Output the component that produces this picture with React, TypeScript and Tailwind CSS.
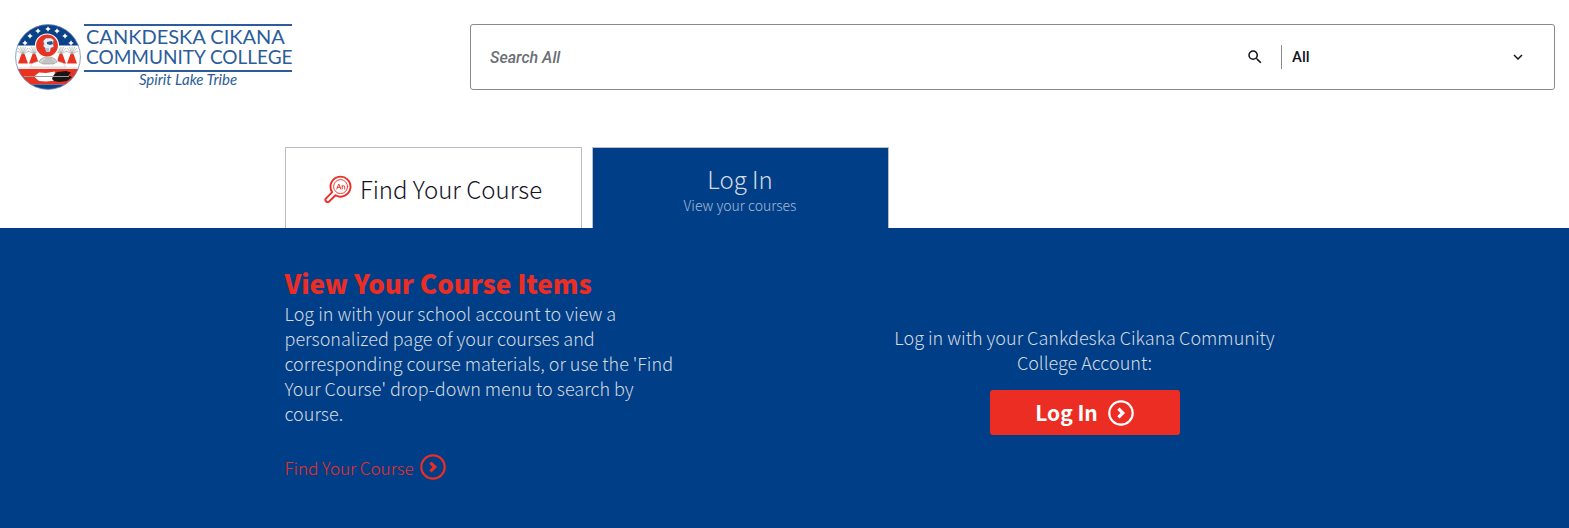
import { ReactNode } from 'react';
import { MdExpandMore, MdSearch } from 'react-icons/md';

const STARS = [
  [10, 19],
  [15, 12],
  [23, 7],
  [33, 5],
  [42, 7],
  [50, 12],
  [56, 19],
];

const TIPIS = [8, 19, 46, 57];

export default function App() {
  return (
    <div className="flex min-h-screen flex-col bg-white font-['Noto_Sans_CJK_SC',sans-serif]">
      <Header />
      <main className="flex grow flex-col">
        <Tabs />
        <LoginPanel />
      </main>
    </div>
  );
}

function Header() {
  return (
    <header className="flex items-start pt-6 pr-3.5 pl-[15px]">
      <div className="w-[455px] shrink-0">
        <a href="#" aria-label="Cankdeska Cikana Community College" className="flex w-fit">
          <Seal />
          <div className="ml-[3px] font-['Lato',sans-serif] text-[#2b5c9b]">
            <div className="w-52 border-y-2 border-[#2b5c9b] px-0.5 pb-0.5 whitespace-nowrap">
              <div className="text-[20px] leading-[20px]">CANKDESKA CIKANA</div>
              <div className="text-[19px] leading-[22px]">COMMUNITY COLLEGE</div>
            </div>
            <div className="text-center text-[15px] leading-[14px] italic">Spirit Lake Tribe</div>
          </div>
        </a>
      </div>
      <form
        className="flex h-[66px] grow items-center rounded-[3px] border border-[#8a8a8a] font-['Roboto',sans-serif] text-[#15131f]"
        onSubmit={(e) => e.preventDefault()}
      >
        <input
          type="search"
          aria-label="Search"
          placeholder="Search All"
          className="h-full min-w-0 grow bg-transparent pl-[19px] text-base outline-none placeholder:font-medium placeholder:text-[#6b6e75] placeholder:italic"
        />
        <button type="submit" aria-label="Submit search" className="mr-[17px]">
          <MdSearch className="h-[18px] w-[18px]" />
        </button>
        <div className="flex h-6 w-[273px] items-center border-l border-[#8a8a8a]">
          <select aria-label="Search category" className="w-full appearance-none bg-transparent pl-2.5 text-[15px] font-medium outline-none">
            <option>All</option>
          </select>
          <MdExpandMore className="pointer-events-none mr-[27px] h-[18px] w-[18px] shrink-0" />
        </div>
      </form>
    </header>
  );
}

function Tabs() {
  return (
    <div className="mx-auto mt-[57px] flex w-full max-w-[1000px] gap-2.5">
      <button className="flex h-[81px] w-[297px] items-center justify-center gap-2 border border-b-0 border-[#b9bec6] pt-0.5 text-[24px] font-light text-[#15131f]">
        <CourseSearchIcon />
        <span>Find Your Course</span>
      </button>
      <button className="flex h-[81px] w-[297px] flex-col items-center justify-center border border-b-0 border-[#b9bec6] bg-[#003f87] pt-1 font-light text-[#d5d9e0]">
        <span className="text-[24px] leading-[30px]">Log In</span>
        <span className="text-sm leading-[22px] text-[#a9bcd4]">View your courses</span>
      </button>
    </div>
  );
}

function LoginPanel() {
  return (
    <section className="grow bg-[#003f87] pt-9 pb-12 text-[18px] leading-[25px] font-light text-[#d5d9e0]">
      <div className="mx-auto flex w-full max-w-[1000px] items-start justify-between">
        <div className="w-2/5">
          <h1 className="text-[26px] leading-[37px] font-black text-[#ec2d24]">View Your Course Items</h1>
          <p>
            Log in with your school account to view a personalized page of your courses and corresponding course
            materials, or use the 'Find Your Course' drop-down menu to search by course.
          </p>
          <a href="#" className="mt-7 flex w-fit items-center gap-1.5 text-[17px] text-[#ec2d24]">
            Find Your Course
            <CircleArrow />
          </a>
        </div>
        <div className="mt-[61px] flex w-2/5 flex-col items-center text-center">
          <p>Log in with your Cankdeska Cikana Community College Account:</p>
          <RedButton>Log In</RedButton>
        </div>
      </div>
    </section>
  );
}

function RedButton({ children }: { children: ReactNode }) {
  return (
    <button className="mt-[15px] flex h-[45px] w-[190px] items-center justify-center gap-2.5 rounded-[3px] bg-[#ec2d24] text-[21px] font-bold text-white">
      {children}
      <CircleArrow />
    </button>
  );
}

function CircleArrow() {
  return (
    <svg viewBox="0 0 26 26" className="h-[26px] w-[26px]" fill="none" stroke="currentColor" aria-hidden="true">
      <circle cx="13" cy="13" r="11.7" strokeWidth="2.2" />
      <path d="M10.4 8.6 14.8 13l-4.4 4.4" strokeWidth="3.2" />
    </svg>
  );
}

function CourseSearchIcon() {
  return (
    <svg viewBox="0 0 28 28" className="h-7 w-7" fill="none" stroke="#ec2d24" strokeLinecap="round" strokeLinejoin="round" aria-hidden="true">
      <path d="M8.2 17.2a10 10 0 1 1 3.3 3.1l-6.2 6.1a2.2 2.2 0 0 1-3.2-3.1z" strokeWidth="1.9" />
      <circle cx="16.6" cy="11.6" r="7" strokeWidth="0.9" />
      <path d="m12.8 14 2-5 2 5m-3.3-1.7h2.6M18.2 14v-3.4m0 .8c1-1.2 2.5-.8 2.5.6v2" strokeWidth="0.9" />
    </svg>
  );
}

function Seal() {
  return (
    <svg viewBox="0 0 66 66" className="h-[66px] w-[66px]" aria-hidden="true">
      <defs>
        <clipPath id="seal">
          <circle cx="33" cy="33" r="32.5" />
        </clipPath>
      </defs>
      <g clipPath="url(#seal)">
        <path d="M0 0h66v66H0z" fill="#fff" />
        <path d="M0 0h66v21.5H0z" fill="#0b4287" />
        <path d="M0 45h66v15.5H0z" fill="#ea3223" />
        <path d="M0 60.5h66V66H0z" fill="#0b4287" />
        {STARS.map(([x, y]) => (
          <path key={x} d="M0-2.8 1-1 2.8 0 1 1 0 2.8-1 1-2.8 0-1-1z" transform={`translate(${x} ${y})`} fill="#fff" />
        ))}
        {TIPIS.map((x) => (
          <g key={x} transform={`translate(${x} 0)`}>
            <path d="m-1.5 30-3.500 9.500H5L1.500 30z" fill="#ea3223" />
            <path d="m0 30-5-6m5 6-2.5-7M0 30v-7m0 7 2.5-7M0 30l5-6m-5 6-6-3m6 3 6-3" stroke="#9a9a9a" strokeWidth="0.6" />
          </g>
        ))}
        <path d="m22 40 3-8 4-2h8l4 2 3 8z" fill="#fff" />
        <path d="m15 43 3-4 6-2h18l6 2 3 4z" fill="#fff" stroke="#b5b5b5" strokeWidth="0.5" />
        <circle cx="32" cy="21.5" r="11.5" fill="#ea3223" stroke="#fff" strokeWidth="1.2" />
        <path d="m28 17 3-3h5l3 2-1 3 1 4-3 1-1 4h-4l-1-4-2-2 1-2z" fill="#e9ecf2" stroke="#8a6470" strokeWidth="0.6" />
        <path d="m32 18 5-1 1 3-3 1-3-1z" fill="#25558f" />
        <path d="M30 24h4v3h-3z" fill="#b9c0ca" />
        <path d="m24 38 2-3 4-2h6l4 2 2 3-4 2H28z" fill="#d6d6d6" stroke="#8f8f8f" strokeWidth="0.6" />
        <path d="M28 37h11m-9-2h7m-10 4h13" stroke="#a0a0a0" strokeWidth="0.7" />
        <path d="M2 44h62" stroke="#c2c2c2" strokeWidth="0.7" />
        <path d="m19 52.5 5-4 7 .5 9-1.5-1 5 2 4-10 1-7-.5z" fill="#fff" />
        <path d="m38 52 4-4 9-1 5 1.500-3 3 4 1.500-5 4-8 1-5-1-2-2z" fill="#161616" />
        <path d="M9 52.5h45" stroke="#9a9a9a" strokeWidth="1" />
      </g>
      <circle cx="33" cy="33" r="32.4" fill="none" stroke="#6e8db5" strokeWidth="0.8" />
    </svg>
  );
}
